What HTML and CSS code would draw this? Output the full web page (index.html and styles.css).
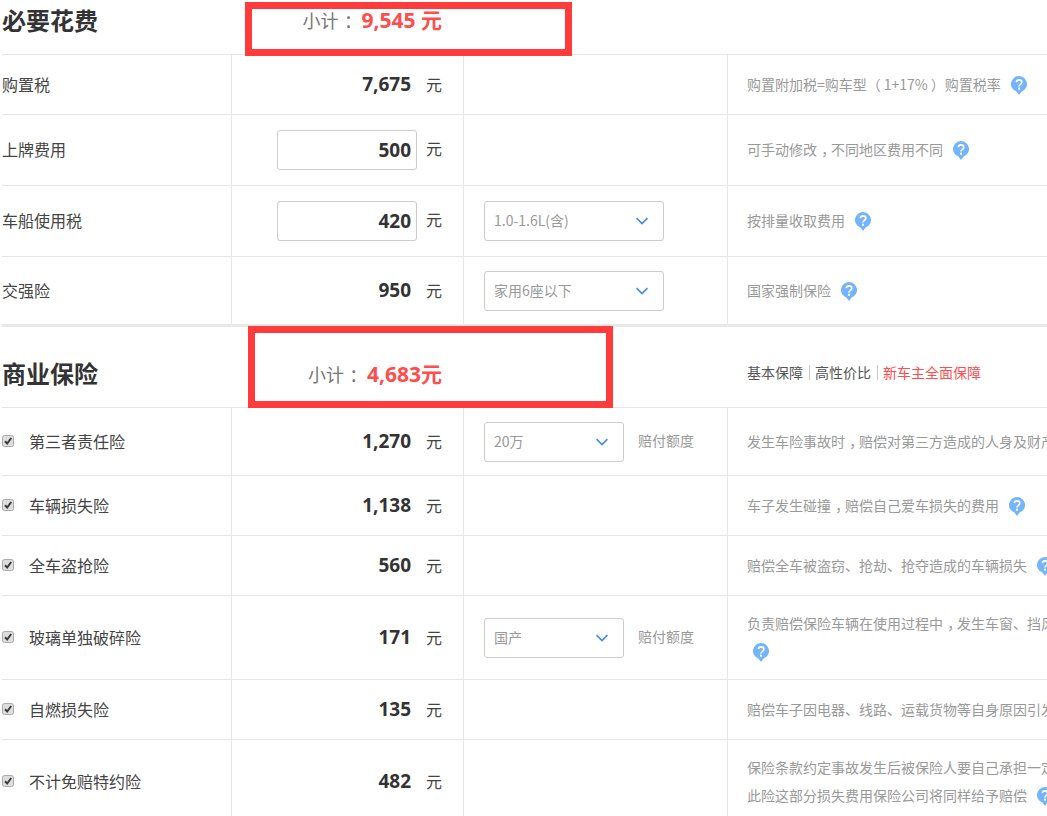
FILE: index.html
```html
<!DOCTYPE html>
<html lang="zh-CN">
<head>
<meta charset="utf-8">
<title>费用明细</title>
<link rel="stylesheet" href="styles.css">
</head>
<body>
<svg class="defs" width="0" height="0" aria-hidden="true">
  <symbol id="help" viewBox="0 0 16 19">
    <path d="M8 0a8 8 0 0 1 2.6 15.57L8 19l-2.6-3.43A8 8 0 0 1 8 0z" fill="#74b4fb"/>
    <path d="M5.3 6.2A2.8 2.8 0 0 1 8 3.8c1.6 0 2.8 1 2.8 2.4 0 1.2-.8 1.8-1.6 2.4-.8.5-1.2 1-1.2 2" fill="none" stroke="#fff" stroke-width="1.7"/>
    <rect x="7" y="11.7" width="2" height="2" fill="#fff"/>
  </symbol>
  <symbol id="chev" viewBox="0 0 12 8">
    <path d="M.6 1.2L6 6.6l5.4-5.4" fill="none" stroke="#4a8fdc" stroke-width="1.7"/>
  </symbol>
  <symbol id="tick" viewBox="0 0 12 12">
    <rect x=".5" y=".5" width="11" height="11" rx="2" fill="#dedede" stroke="#a9a9a9"/>
    <path d="M3 6.2l2.2 2.3L9.2 3" fill="none" stroke="#3c3c3c" stroke-width="2"/>
  </symbol>
</svg>

<div class="page">
  <section class="sec">
    <header class="head">
      <h2 class="title">必要花费</h2>
      <div class="total"><span class="total-label">小计<span class="punct">：</span></span><b class="total-num">9,545 元</b></div>
    </header>
    <div class="row h60">
      <div class="c1"><span class="label">购置税</span></div>
      <div class="c2"><b class="amt">7,675</b><span class="unit">元</span></div>
      <div class="c3"></div>
      <div class="c4"><span class="note">购置附加税=购车型（<span class="digits">1+17%</span>）购置税率<svg class="help"><use href="#help"/></svg></span></div>
    </div>
    <div class="row h71">
      <div class="c1"><span class="label">上牌费用</span></div>
      <div class="c2"><div class="input">500</div><span class="unit unit-in">元</span></div>
      <div class="c3"></div>
      <div class="c4"><span class="note">可手动修改<span class="punct">，</span>不同地区费用不同<svg class="help"><use href="#help"/></svg></span></div>
    </div>
    <div class="row h71">
      <div class="c1"><span class="label">车船使用税</span></div>
      <div class="c2"><div class="input">420</div><span class="unit unit-in">元</span></div>
      <div class="c3"><div class="select wide">1.0-1.6L(含)<svg class="chev"><use href="#chev"/></svg></div></div>
      <div class="c4"><span class="note">按排量收取费用<svg class="help"><use href="#help"/></svg></span></div>
    </div>
    <div class="row h68 last">
      <div class="c1"><span class="label">交强险</span></div>
      <div class="c2"><b class="amt">950</b><span class="unit">元</span></div>
      <div class="c3"><div class="select wide">家用6座以下<svg class="chev"><use href="#chev"/></svg></div></div>
      <div class="c4"><span class="note">国家强制保险<svg class="help"><use href="#help"/></svg></span></div>
    </div>
    <div class="box box-a"></div>
  </section>

  <section class="sec sec-b">
    <header class="head head-b">
      <h2 class="title">商业保险</h2>
      <div class="total"><span class="total-label">小计<span class="punct">：</span></span><b class="total-num">4,683元</b></div>
      <nav class="plans"><a class="plan">基本保障</a><i class="sep"></i><a class="plan">高性价比</a><i class="sep"></i><a class="plan hot">新车主全面保障</a></nav>
    </header>
    <div class="row h68">
      <div class="c1"><svg class="check"><use href="#tick"/></svg><span class="label">第三者责任险</span></div>
      <div class="c2"><b class="amt">1,270</b><span class="unit">元</span></div>
      <div class="c3"><div class="select">20万<svg class="chev"><use href="#chev"/></svg></div><span class="hint">赔付额度</span></div>
      <div class="c4"><span class="note">发生车险事故时<span class="punct">，</span>赔偿对第三方造成的人身及财产</span></div>
    </div>
    <div class="row h60">
      <div class="c1"><svg class="check"><use href="#tick"/></svg><span class="label">车辆损失险</span></div>
      <div class="c2"><b class="amt">1,138</b><span class="unit">元</span></div>
      <div class="c3"></div>
      <div class="c4"><span class="note">车子发生碰撞<span class="punct">，</span>赔偿自己爱车损失的费用<svg class="help"><use href="#help"/></svg></span></div>
    </div>
    <div class="row h60">
      <div class="c1"><svg class="check"><use href="#tick"/></svg><span class="label">全车盗抢险</span></div>
      <div class="c2"><b class="amt">560</b><span class="unit">元</span></div>
      <div class="c3"></div>
      <div class="c4"><span class="note">赔偿全车被盗窃、抢劫、抢夺造成的车辆损失<svg class="help"><use href="#help"/></svg></span></div>
    </div>
    <div class="row h84">
      <div class="c1"><svg class="check"><use href="#tick"/></svg><span class="label">玻璃单独破碎险</span></div>
      <div class="c2"><b class="amt">171</b><span class="unit">元</span></div>
      <div class="c3"><div class="select">国产<svg class="chev"><use href="#chev"/></svg></div><span class="hint">赔付额度</span></div>
      <div class="c4"><span class="note">负责赔偿保险车辆在使用过程中<span class="punct">，</span>发生车窗、挡风<br><svg class="help help-first"><use href="#help"/></svg></span></div>
    </div>
    <div class="row h60">
      <div class="c1"><svg class="check"><use href="#tick"/></svg><span class="label">自燃损失险</span></div>
      <div class="c2"><b class="amt">135</b><span class="unit">元</span></div>
      <div class="c3"></div>
      <div class="c4"><span class="note">赔偿车子因电器、线路、运载货物等自身原因引发</span></div>
    </div>
    <div class="row h86 last">
      <div class="c1"><svg class="check"><use href="#tick"/></svg><span class="label">不计免赔特约险</span></div>
      <div class="c2"><b class="amt">482</b><span class="unit">元</span></div>
      <div class="c3"></div>
      <div class="c4"><span class="note">保险条款约定事故发生后被保险人要自己承担一定<br>此险这部分损失费用保险公司将同样给予赔偿<svg class="help"><use href="#help"/></svg></span></div>
    </div>
    <div class="box box-b"></div>
  </section>
</div>
</body>
</html>
```

FILE: styles.css
```css
html, body {
  margin: 0;
  height: 816px;
  overflow: hidden;
  background: #fff;
}
body {
  font-family: "Noto Sans CJK SC", "Noto Sans", sans-serif;
  color: #333;
}
.defs { position: absolute; }
.page { width: 1045px; margin-left: 2px; }

.sec { position: relative; }
.sec-b { border-top: 3px solid #e8e8e8; }

.head {
  display: flex;
  align-items: flex-end;
  height: 54px;
  border-bottom: 1px solid #e6e6e6;
}
.head-b { height: 80px; }
.title {
  width: 229px;
  margin: 0 0 18px;
  font-size: 24px;
  line-height: 32px;
  font-weight: 700;
  color: #333;
}
.total {
  width: 211px;
  margin-bottom: 19px;
  text-align: right;
  white-space: nowrap;
  line-height: 28px;
}
.head-b .total { margin-bottom: 18px; }
.total-label { margin-right: 5px; font-size: 18px; color: #777; }
.punct { padding-left: .3em; margin-right: -.3em; }
.total-num { font-family: "Open Sans", "Noto Sans CJK SC", sans-serif; font-size: 21px; font-weight: 700; color: #ff4c4c; }
.plans {
  display: flex;
  align-items: center;
  margin: 0 0 21px 305px;
  font-size: 14px;
  line-height: 28px;
  color: #555;
  white-space: nowrap;
}
.hot { color: #ff4c4c; }
.sep { width: 1px; height: 15px; margin: 0 5.5px; background: #c8c8c8; }

.row { display: flex; border-bottom: 1px solid #e6e6e6; }
.row.last { border-bottom: 0; }
.h60 { height: 59px; }
.h68 { height: 67px; }
.h71 { height: 70px; }
.h84 { height: 83px; }
.h86 { height: 84px; }

.c1, .c2, .c3, .c4 { display: flex; align-items: center; box-sizing: border-box; }
.c1 { width: 230px; border-right: 1px solid #e6e6e6; }
.c2 { width: 232px; justify-content: flex-end; padding-right: 21px; border-right: 1px solid #e6e6e6; }
.c3 { width: 264px; padding-left: 20px; border-right: 1px solid #e6e6e6; }
.c4 { flex: 1; min-width: 0; padding-left: 19px; }

.label { margin-top: -2px; font-size: 16px; line-height: 24px; color: #444; white-space: nowrap; }
.check { width: 12px; height: 12px; margin-right: 15px; margin-top: -2px; flex: none; }

.amt {
  font-family: "Open Sans", "Noto Sans", sans-serif;
  font-size: 19px;
  font-weight: 700;
  line-height: 24px;
  color: #333;
  margin-top: -2px;
}
.unit { width: 16px; margin-left: 15px; margin-top: -2px; font-size: 16px; line-height: 24px; color: #444; }
.unit-in { margin-left: 9px; margin-top: -4px; }

.input {
  box-sizing: border-box;
  width: 140px;
  height: 40px;
  padding-right: 5px;
  border: 1px solid #ccc;
  border-radius: 3px;
  font-family: "Open Sans", "Noto Sans", sans-serif;
  font-size: 19px;
  font-weight: 700;
  line-height: 38px;
  text-align: right;
  color: #333;
}

.select {
  position: relative;
  box-sizing: border-box;
  flex: none;
  width: 140px;
  height: 40px;
  padding-left: 9px;
  border: 1px solid #ccc;
  border-radius: 3px;
  font-size: 14px;
  line-height: 36px;
  color: #999;
}
.select.wide { width: 180px; }
.chev { position: absolute; right: 15px; top: 15px; width: 12px; height: 8px; }
.hint { margin-left: 14px; margin-top: -4px; font-size: 14px; line-height: 24px; color: #999; white-space: nowrap; }

.note { margin-top: -2px; font-size: 14px; line-height: 28px; color: #999; white-space: nowrap; }
.digits { margin: 0 3px; }
.help { width: 16px; height: 19px; margin-left: 10px; vertical-align: -5px; }
.help-first { margin-left: 6px; }

.box { position: absolute; box-sizing: border-box; border: 7px solid #ff3b3b; pointer-events: none; }
.box-a { left: 243px; top: 2px; width: 327px; height: 54px; }
.box-b { left: 246px; top: -1px; width: 365px; height: 82px; }
```
